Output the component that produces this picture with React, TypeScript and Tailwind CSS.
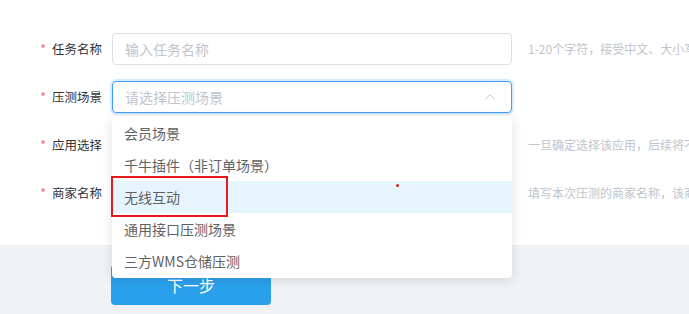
import { ChevronUp } from 'lucide-react'

const font = 'font-["Microsoft_YaHei","Noto_Sans_CJK_SC",sans-serif]'

const options = ['会员场景', '千牛插件（非订单场景）', '无线互动', '通用接口压测场景', '三方WMS仓储压测']

function Label({ text }: { text: string }) {
  return (
    <div className="flex w-[112px] shrink-0 items-center justify-end pr-[10px] text-[12.5px] text-[#333]">
      <span className="mr-[6px] text-[#f56c6c]">*</span>
      {text}
    </div>
  )
}

function Hint({ text }: { text: string }) {
  return <div className="ml-4 whitespace-nowrap text-xs text-[#c0c4cc]">{text}</div>
}

export default function App() {
  return (
    <div className={`relative h-[314px] w-[689px] overflow-hidden bg-white ${font}`}>
      <div className="flex flex-col gap-4 pt-[33px] pb-9">
        <div className="flex h-8 items-center">
          <Label text="任务名称" />
          <div className="flex h-8 w-[400px] shrink-0 items-center rounded border border-[#dcdfe6] px-3 text-sm text-[#c0c4cc]">
            输入任务名称
          </div>
          <Hint text="1-20个字符，接受中文、大小写字母、数字" />
        </div>

        <div className="flex h-8 items-center">
          <Label text="压测场景" />
          <div className="flex h-8 w-[400px] shrink-0 items-center justify-between rounded border border-[#409eff] px-3 text-sm text-[#c0c4cc] shadow-[0_0_0_2px_rgba(64,158,255,0.2)]">
            请选择压测场景
            <ChevronUp className="h-[18px] w-[18px] text-[#c0c4cc]" strokeWidth={1.25} />
          </div>
        </div>

        <div className="flex h-8 items-center">
          <Label text="应用选择" />
          <div className="h-8 w-[400px] shrink-0" />
          <Hint text="一旦确定选择该应用，后续将不可更改" />
        </div>

        <div className="flex h-8 items-center">
          <Label text="商家名称" />
          <div className="h-8 w-[400px] shrink-0" />
          <Hint text="填写本次压测的商家名称，该商家名称将会展示" />
        </div>
      </div>

      <div className="h-full bg-[#f0f2f5] pt-5 pl-[111px]">
        <button className="h-10 w-[160px] rounded-sm bg-[#2aa0ec] text-base text-white">下一步</button>
      </div>

      {/* dropdown */}
      <div className="absolute top-[116px] left-[112px] w-[400px] rounded bg-white py-px shadow-[0_2px_12px_rgba(0,0,0,0.12)]">
        {options.map((o) => (
          <div
            key={o}
            className={`flex h-8 items-center px-3 text-sm text-[#606266] ${o === '无线互动' ? 'bg-[#e6f4fd]' : ''}`}
          >
            {o}
          </div>
        ))}
      </div>

      <div className="absolute top-[176px] left-[111px] h-[41px] w-[117px] border-2 border-[#e8191d]" />
      <div className="absolute top-[184px] left-[396px] h-[3px] w-[3px] rounded-full bg-[#e8191d]" />
    </div>
  )
}
